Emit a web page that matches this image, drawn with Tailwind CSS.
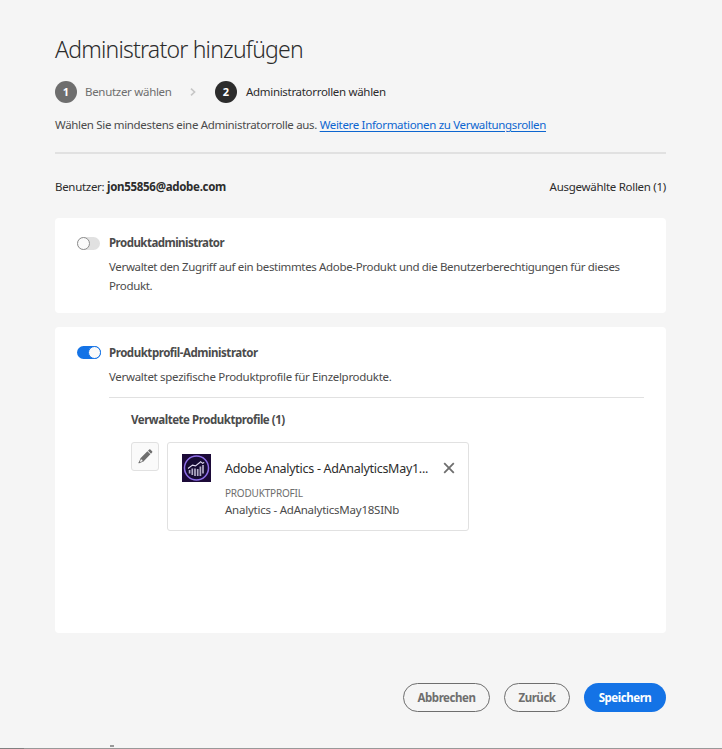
<!DOCTYPE html>
<html lang="de">
<head>
<meta charset="utf-8">
<title>Administrator hinzufügen</title>
<script src="https://cdn.jsdelivr.net/npm/@tailwindcss/browser@4"></script>
</head>
<body class="h-[749px] overflow-hidden bg-[#f5f5f5] font-['Noto_Sans',sans-serif] text-[11.5px] leading-5 tracking-[-0.33px] whitespace-nowrap text-[#4b4b4b]">
<div class="relative flex h-full flex-col pt-[33px] pr-14 pl-[55px]">
  <h1 class="h-8 text-[23px] leading-8 font-light tracking-[-0.79px] text-[#2c2c2c]">Administrator hinzufügen</h1>

  <!-- Step indicator -->
  <ol class="mt-4 flex h-[22px] items-center">
    <li class="flex items-center text-[#6e6e6e]"><span class="mr-[8px] flex size-[22px] items-center justify-center rounded-full bg-[#6e6e6e] text-[11px] font-bold tracking-normal text-white">1</span><span class="w-[87px] tracking-[-0.3px]">Benutzer wählen</span></li>
    <li class="mr-[19px] ml-[18px] flex w-[6px]"><svg class="h-[8px] w-[6px]" viewBox="0 0 6 8" fill="none" stroke="#c6c6c6" stroke-width="1.6"><path d="M1 .6 4.6 4 1 7.4"/></svg></li>
    <li class="flex items-center text-[#2c2c2c]"><span class="mr-[9px] flex size-[22px] items-center justify-center rounded-full bg-[#2c2c2c] text-[11px] font-bold tracking-normal text-white">2</span><span class="tracking-[-0.31px]">Administratorrollen wählen</span></li>
  </ol>

  <p class="mt-3 h-5 tracking-[-0.325px]">Wählen Sie mindestens eine Administratorrolle aus. <a href="#" class="text-[#0d66d0] underline decoration-1 underline-offset-2">Weitere Informationen zu Verwaltungsrollen</a></p>
  <hr class="mt-[17px] h-[2px] border-0 bg-[#e1e1e1]">

  <div class="mt-[23px] flex h-5 justify-between text-[#2c2c2c]">
    <span class="tracking-[-0.3px]">Benutzer: <b>jon55856@adobe.com</b></span>
    <span class="tracking-[-0.28px]">Ausgewählte Rollen (1)</span>
  </div>

  <!-- Product administrator -->
  <section class="mt-[21px] flex h-[95px] shrink-0 rounded bg-white pt-[15px] pl-[22px]">
    <span class="mt-1 mr-[9px] flex h-[13px] w-[23px] rounded-full bg-[#e1e1e1]"><span class="size-[13px] rounded-full border border-[#8e8e8e] bg-[#fafafa]"></span></span>
    <div>
      <h2 class="h-5 font-bold tracking-[-0.53px]">Produktadministrator</h2>
      <p class="mt-[4px] leading-[19px] tracking-[-0.34px]">Verwaltet den Zugriff auf ein bestimmtes Adobe-Produkt und die Benutzerberechtigungen für dieses<br>Produkt.</p>
    </div>
  </section>

  <!-- Product profile administrator -->
  <section class="mt-[14px] flex h-[306px] shrink-0 rounded bg-white pt-[15px] pr-[22px] pl-[22px]">
    <span class="mt-1 mr-2 flex h-[13px] w-6 justify-end rounded-full bg-[#1473e6]"><span class="size-[13px] rounded-full border border-[#1473e6] bg-[#fafafa]"></span></span>
    <div class="flex-1 pt-px">
      <h2 class="h-5 font-bold tracking-[-0.46px]">Produktprofil-Administrator</h2>
      <p class="mt-1 h-5 tracking-[-0.305px]">Verwaltet spezifische Produktprofile für Einzelprodukte.</p>
      <hr class="mt-[10px] h-px border-0 bg-[#e1e1e1]">
      <div class="pl-[22px]">
        <h3 class="mt-3 h-5 font-bold tracking-[-0.46px]">Verwaltete Produktprofile (1)</h3>
        <div class="mt-3 flex items-start">
          <button class="mr-2 flex h-[29px] w-7 items-center justify-center rounded-[3px] border border-[#e1e1e1] bg-[#fafafa]">
            <svg class="size-[15px]" viewBox="0 0 15 15"><path d="M3 9.3.9 13.9 5.7 12Z" fill="#fafafa" stroke="#6e6e6e" stroke-width=".8" stroke-linejoin="round"/><path d="M.5 14.3 1.4 12.2 2.7 13.5ZM2.7 9 9.4 2.3 12.4 5.3 5.7 12.2 4.6 12.1 4.3 10.6 2.8 10.3ZM10 1.7 11.2.6Q11.8 0 12.4.6L14.1 2.3Q14.7 2.9 14.1 3.5L13 4.7Z" fill="#6e6e6e"/></svg>
          </button>
          <article class="flex h-[89px] w-[302px] rounded-[3px] border border-[#e1e1e1] pt-[11px] pl-[14px]">
            <svg class="mr-[14px] h-[28px] w-[29px]" viewBox="0 0 29 28"><path fill="#1c0a38" d="M0 0h29v28H0z"/><circle cx="14.5" cy="14" r="12" fill="#160b33" stroke="#8f6fe8" stroke-width="1.5"/><path d="M7.6 16v3.5M10.3 14.5v6.5M13 14.5v7.5M15.7 15v7M18.4 12.5v9.5M21 11v8.5" stroke="#b4adc8" stroke-width="1.7"/><path d="m6 14.5 4.5-3.4 3 .8 5.2-4.2 1.8 1.6 1.7-.8" fill="none" stroke="#e2dcf3" stroke-width="1.1"/></svg>
            <div class="w-[204px] pt-[5px]">
              <h4 class="h-5 text-[12.5px] tracking-[-0.29px] text-[#2c2c2c]">Adobe Analytics - AdAnalyticsMay1...</h4>
              <p class="mt-[4px] h-5 text-[10px] tracking-[-0.2px] text-[#6e6e6e]">PRODUKTPROFIL</p>
              <p class="-mt-[3px] h-5 tracking-[-0.24px]">Analytics - AdAnalyticsMay18SINb</p>
            </div>
            <svg class="mt-[8px] ml-[14px] size-[12px]" viewBox="0 0 12 12" stroke="#6e6e6e" stroke-width="1.8"><path d="m1.2 1.2 9.6 9.6m0-9.6-9.6 9.6"/></svg>
          </article>
        </div>
      </div>
    </div>
  </section>

  <footer class="mt-[50px] flex h-[29px] justify-end gap-[14px] font-bold tracking-[-0.45px]">
    <button class="h-[29px] w-[87px] rounded-full border border-[#6e6e6e] text-[#6e6e6e]">Abbrechen</button>
    <button class="h-[29px] w-[66px] rounded-full border border-[#6e6e6e] text-[#6e6e6e]">Zurück</button>
    <button class="h-[29px] w-[82px] rounded-full bg-[#1473e6] text-white">Speichern</button>
  </footer>

  <!-- Bottom edge line with its marker -->
  <div class="absolute inset-x-0 bottom-0 h-px bg-[#999]"><div class="h-px w-6 bg-[#808080]"></div><div class="absolute bottom-[2px] left-[110px] h-[2px] w-1 bg-[#999]"></div></div>
</div>
</body>
</html>
